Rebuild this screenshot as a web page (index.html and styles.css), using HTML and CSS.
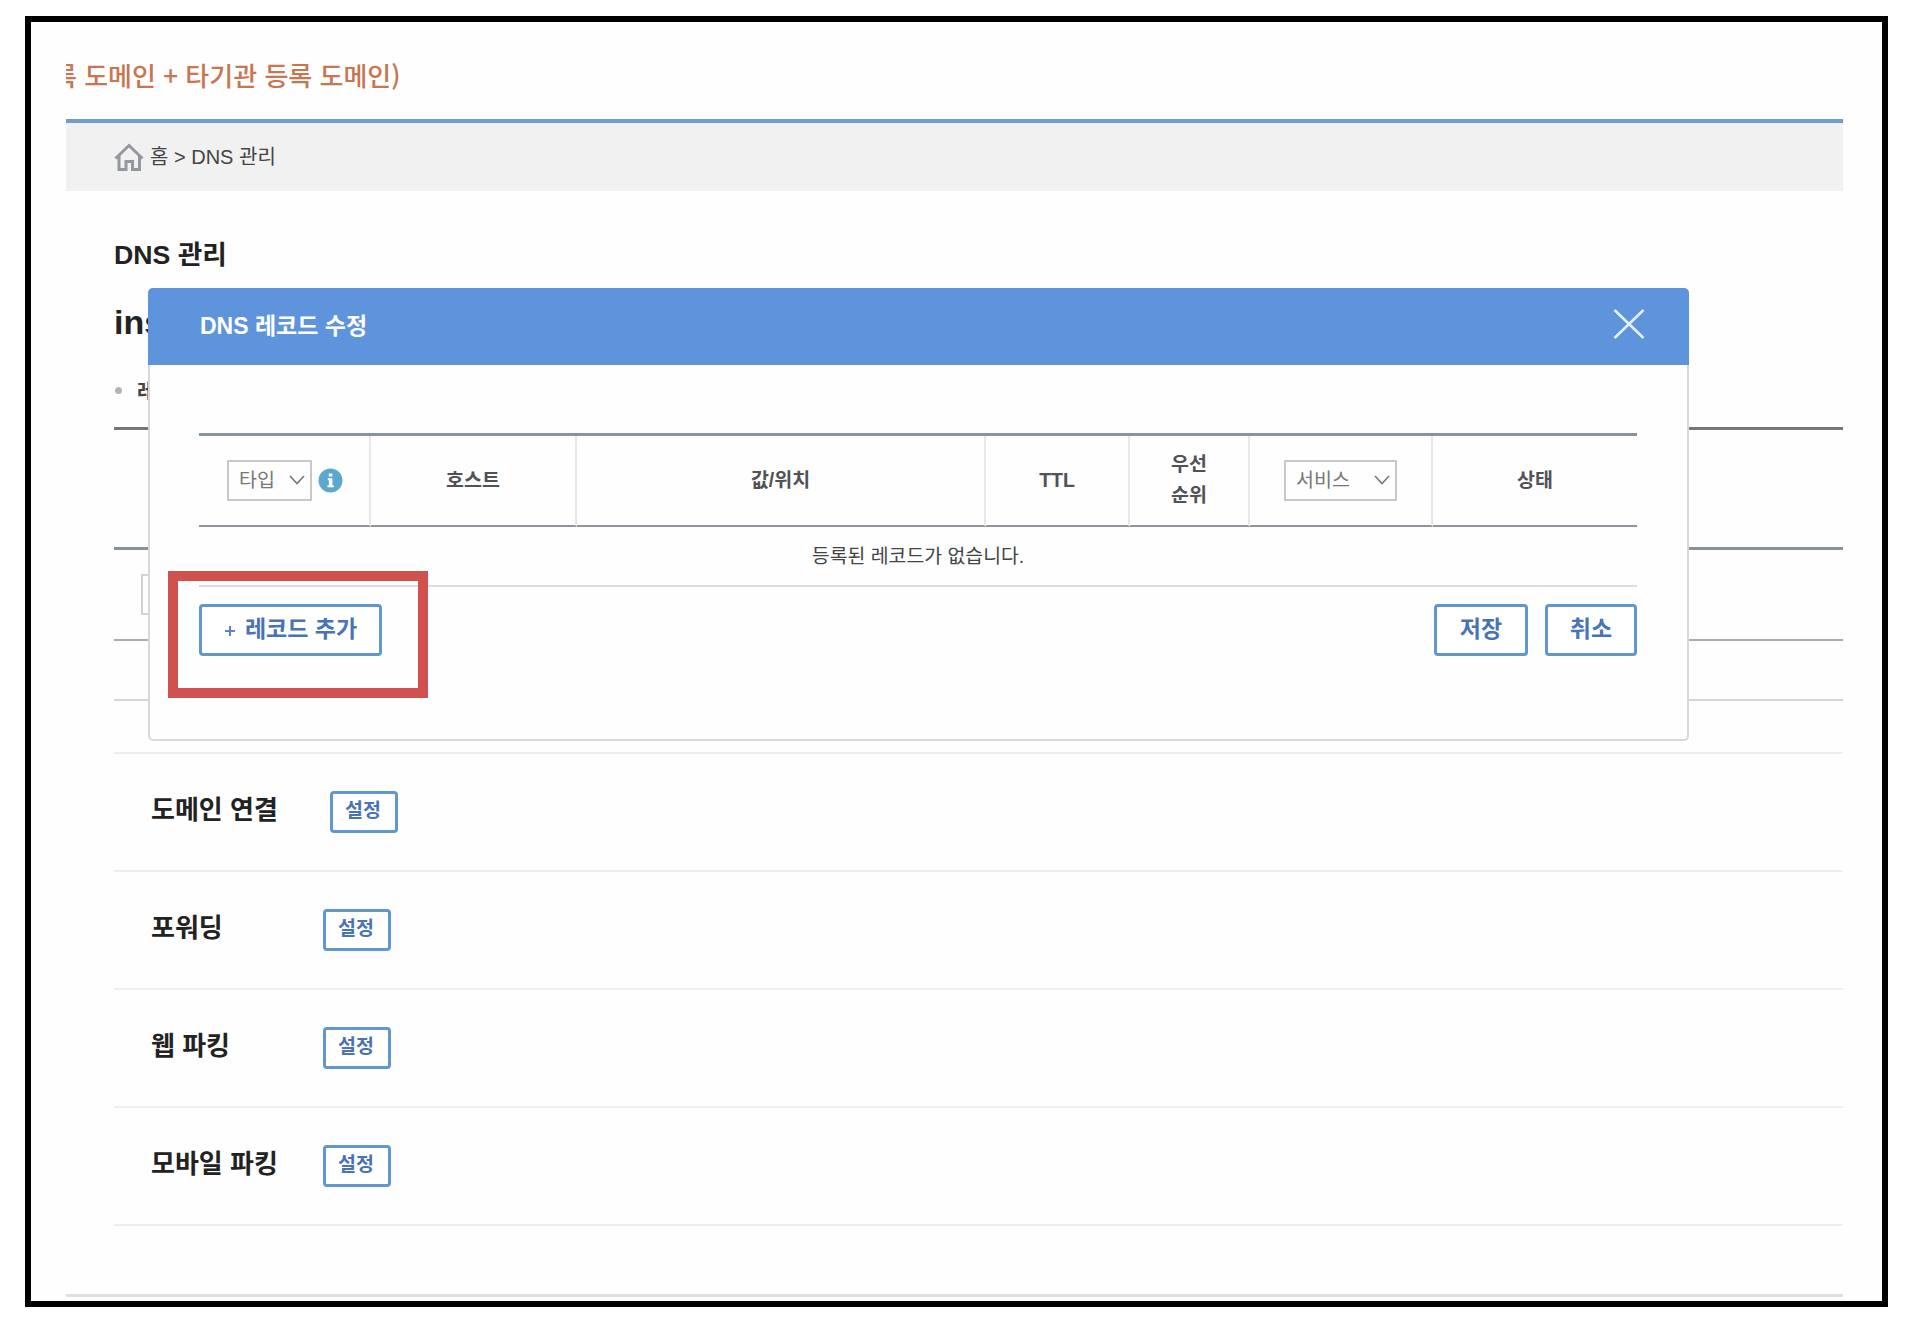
FILE: index.html
```html
<!DOCTYPE html>
<html lang="ko">
<head>
    <meta charset="UTF-8">
    <meta name="viewport" content="width=device-width, initial-scale=1.0">
    <title>DNS 관리</title>
    <link rel="stylesheet" href="styles.css">
</head>
<body>
    <div class="frame">
        <div class="notice">록 도메인 + 타기관 등록 도메인)</div>

        <div class="breadcrumb">
            <svg class="home" width="30" height="29" viewBox="0 0 30 29" fill="none" stroke="#94979d" stroke-width="3">
                <path d="M1.5 15.5 L15 2.5 L28.5 15.5"/>
                <path d="M5 12.5 V26.5 H12 V18.5 H18.5 V26.5 H25.5 V12.5"/>
            </svg>
            <span>홈 &gt; DNS 관리</span>
        </div>

        <div class="content">
            <h1>DNS 관리</h1>
            <h2 class="domain">ins</h2>
            <div class="record-title">레</div>
            <div class="record-head"></div>
            <div class="record-filter"><span class="filter-box"></span></div>
            <div class="record-empty"></div>

            <div class="settings">
                <div class="setting wide"><h3>도메인 연결</h3><button class="btn small">설정</button></div>
                <div class="setting"><h3>포워딩</h3><button class="btn small">설정</button></div>
                <div class="setting"><h3>웹 파킹</h3><button class="btn small">설정</button></div>
                <div class="setting"><h3>모바일 파킹</h3><button class="btn small">설정</button></div>
            </div>
        </div>
        <div class="footer-line"></div>

        <div class="modal">
            <div class="modal-header">
                <span>DNS 레코드 수정</span>
                <svg width="32" height="30" viewBox="0 0 32 30" stroke="#e6f0fb" stroke-width="2.5">
                    <path d="M1.5 1 L30.5 29 M30.5 1 L1.5 29"/>
                </svg>
            </div>
            <div class="modal-body">
                <table class="records">
                    <colgroup>
                        <col class="c-type"><col class="c-host"><col class="c-value"><col class="c-ttl">
                        <col class="c-prio"><col class="c-service"><col class="c-state">
                    </colgroup>
                    <thead>
                        <tr>
                            <th>
                                <div class="type-cell">
                                    <div class="select type">타입
                                        <svg width="16" height="10" viewBox="0 0 16 10" fill="none" stroke="#777" stroke-width="1.6"><path d="M1 1 L8 8.5 L15 1"/></svg>
                                    </div>
                                    <svg width="25" height="25" viewBox="0 0 25 25">
                                        <circle cx="12.5" cy="12.5" r="12" fill="#5ba8cc"/>
                                        <path d="M10.8 5.5 h3.6 v3 h-3.6z M9.8 10.3 h4.6 v7 h1.3 v2 h-6.2 v-2 h1.4 v-5 h-1.1z" fill="#fff"/>
                                    </svg>
                                </div>
                            </th>
                            <th>호스트</th>
                            <th>값/위치</th>
                            <th>TTL</th>
                            <th>우선<br>순위</th>
                            <th>
                                <div class="select service">서비스
                                    <svg width="16" height="10" viewBox="0 0 16 10" fill="none" stroke="#777" stroke-width="1.6"><path d="M1 1 L8 8.5 L15 1"/></svg>
                                </div>
                            </th>
                            <th>상태</th>
                        </tr>
                    </thead>
                    <tbody>
                        <tr><td colspan="7">등록된 레코드가 없습니다.</td></tr>
                    </tbody>
                </table>
                <div class="modal-actions">
                    <button class="btn add"><svg width="12" height="12" viewBox="0 0 12 12" stroke="#5c86be" stroke-width="2"><path d="M6 1 V11 M1 6 H11"/></svg>레코드 추가</button>
                    <button class="btn save">저장</button>
                    <button class="btn cancel">취소</button>
                </div>
            </div>
            <div class="highlight"></div>
        </div>
    </div>
</body>
</html>
```
FILE: styles.css
```css
* {
    box-sizing: border-box;
}

body {
    margin: 0;
    padding: 16px 0 0 25px;
    background-color: #fff;
    color: #222;
    font-family: "Liberation Sans", "Noto Sans CJK KR", sans-serif;
    font-size: 20px;
}

h1, h2, h3 {
    margin: 0;
}

.frame {
    position: relative;
    width: 1863px;
    height: 1291px;
    padding: 0 39px 0 35px;
    border: 6px solid #000;
    background-color: #fefefe;
    overflow: hidden;
}

.notice {
    height: 97px;
    padding-top: 33px;
    overflow: hidden;
    color: #c87550;
    font-family: "Noto Sans CJK KR", sans-serif;
    font-size: 26px;
    font-weight: 500;
    line-height: 40px;
    text-indent: -13px;
    white-space: nowrap;
}

.breadcrumb {
    display: flex;
    align-items: center;
    gap: 6px;
    height: 72px;
    padding-left: 48px;
    border-top: 4px solid #6b9dd3;
    background-color: #f1f1f1;
    color: #444;
    line-height: 30px;
}

.content {
    padding-left: 48px;
}

.content h1 {
    height: 98px;
    padding-top: 44px;
    font-size: 26.7px;
    line-height: 40px;
}

.domain {
    height: 82px;
    padding-top: 13px;
    font-size: 34px;
    line-height: 40px;
}

.record-title {
    display: flex;
    align-items: center;
    gap: 15px;
    height: 40px;
    margin-bottom: 16px;
    padding: 0 0 1px 1px;
    color: #444;
    font-weight: bold;
}

.record-title::before {
    content: "";
    width: 7px;
    height: 7px;
    border-radius: 50%;
    background-color: #b5b5b5;
}

.record-head {
    height: 123px;
    border-top: 3px solid #777;
    border-bottom: 3px solid #8a9299;
}

.record-filter {
    height: 91px;
    padding: 24px 27px;
    border-bottom: 2px solid #a9adb0;
}

.filter-box {
    display: block;
    width: 85px;
    height: 41px;
    border: 2px solid #d2d2d2;
}

.record-empty {
    height: 60px;
    border-bottom: 2px solid #d5d5d5;
}

.settings {
    margin-top: 51px;
    border-top: 2px solid #eee;
}

.setting {
    display: flex;
    align-items: center;
    height: 118px;
    padding-left: 37px;
    border-bottom: 2px solid #eee;
}

.setting h3 {
    width: 172px;
    padding-bottom: 4px;
    font-size: 26px;
    line-height: 40px;
}

.wide h3 {
    width: 179px;
}

.footer-line {
    height: 3px;
    margin-top: 68px;
    background-color: #dfdfdf;
}

.btn {
    padding: 0 0 6px;
    border: 3px solid #6296cf;
    border-radius: 4px;
    background-color: #fff;
    color: #4873b5;
    font-family: inherit;
    font-size: 23px;
    font-weight: bold;
}

.small {
    width: 68px;
    height: 42px;
    padding: 0 2px 7px 0;
    font-size: 19.5px;
}

/* Record edit dialog */
.modal {
    position: absolute;
    left: 117px;
    top: 266px;
    width: 1541px;
    height: 453px;
    border: 2px solid #d8d8d8;
    border-top: none;
    border-radius: 5px;
    background-color: #fefefe;
}

.modal-header {
    display: flex;
    align-items: center;
    justify-content: space-between;
    height: 77px;
    margin: 0 -2px;
    padding: 0 44px 5px 52px;
    border-radius: 5px 5px 0 0;
    background-color: #5e94db;
    color: #fff;
    font-size: 23px;
    font-weight: bold;
}

.modal-body {
    padding: 68px 50px 0 49px;
}

.records {
    width: 100%;
    table-layout: fixed;
    border-spacing: 0;
    border-top: 3px solid #89939b;
}

.c-type { width: 172px; }
.c-host { width: 206px; }
.c-value { width: 409px; }
.c-ttl { width: 144px; }
.c-prio { width: 120px; }
.c-service { width: 183px; }

.records th {
    height: 91px;
    padding: 0 0 1px;
    border-right: 2px solid #e8e8e8;
    border-bottom: 2px solid #90959b;
    color: #505256;
    font-size: 19.5px;
    line-height: 31px;
}

.records th:last-child {
    border-right: none;
}

.records td {
    height: 60px;
    padding: 0 0 4px;
    border-bottom: 2px solid #ddd;
    color: #444;
    font-size: 19.4px;
    text-align: center;
}

.type-cell {
    display: flex;
    align-items: center;
    gap: 6px;
    padding-left: 28px;
}

.select {
    display: flex;
    align-items: center;
    justify-content: space-between;
    height: 41px;
    padding: 0 5px 0 10px;
    border: 2px solid #c8c8c8;
    color: #777;
    font-weight: normal;
}

.type {
    width: 85px;
}

.service {
    width: 113px;
    margin: 0 auto;
}

.modal-actions {
    display: flex;
    gap: 17px;
    padding-top: 17px;
}

.modal-actions .btn {
    height: 52px;
}

.modal-actions .add {
    width: 183px;
    margin-right: auto;
}

.add svg {
    margin-right: 9px;
}

.save {
    width: 94px;
}

.cancel {
    width: 92px;
}

.highlight {
    position: absolute;
    left: 18px;
    top: 283px;
    width: 260px;
    height: 127px;
    border: 10px solid #d15151;
}
```
